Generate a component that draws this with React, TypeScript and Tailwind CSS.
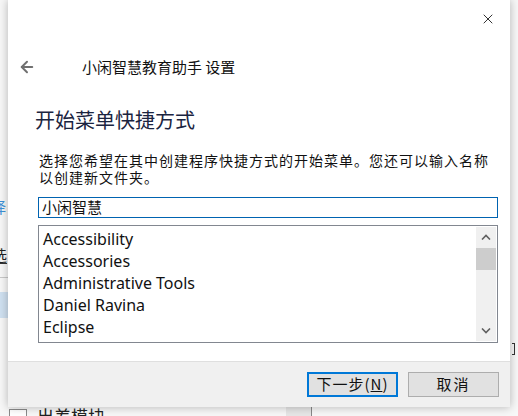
import { X, ArrowLeft } from 'lucide-react';

const cjk = { fontFamily: '"Noto Sans CJK SC", "Noto Sans", sans-serif' };
const latin = { fontFamily: '"Noto Sans", "Noto Sans CJK SC", sans-serif' };

const folders = ['Accessibility', 'Accessories', 'Administrative Tools', 'Daniel Ravina', 'Eclipse'];

function Chevron({ up }: { up?: boolean }) {
  return (
    <svg width="10" height="6" viewBox="0 0 10 6" className="text-[#606060]">
      <path
        d={up ? 'M1 5.5 L5 1.5 L9 5.5' : 'M1 0.5 L5 4.5 L9 0.5'}
        fill="none"
        stroke="currentColor"
        strokeWidth="1.6"
      />
    </svg>
  );
}

function ScrollBar() {
  return (
    <div className="flex w-[20px] flex-col bg-[#f0f0f0]">
      <div className="flex h-[20px] items-center justify-center">
        <Chevron up />
      </div>
      <div className="mt-[1px] h-[22px] bg-[#cdcdcd]" />
      <div className="flex-1" />
      <div className="flex h-[20px] items-center justify-center">
        <Chevron />
      </div>
    </div>
  );
}

// the window that sits behind the installer dialog
function Backdrop() {
  return (
    <div className="absolute inset-0 bg-[#f7f7f7]" style={cjk}>
      <div className="absolute left-[-9px] top-[198px] text-[15px] leading-[18px] text-[#3c8fd6]">择</div>
      <div className="absolute left-[-8px] top-[246px] border-b border-[#333] text-[15px] leading-[17px] text-[#222]">选</div>
      <div className="absolute left-0 top-[277px] h-[1px] w-[8px] bg-[#c8c8c8]" />
      <div className="absolute left-0 top-[292px] h-[26px] w-[8px] bg-[#cfe0f0]" />
      <div className="absolute left-[9px] top-[409px] h-[16px] w-[18px] border border-[#8a8a8a] bg-white" />
      <div className="absolute left-[37px] top-[406px] text-[17px] leading-[20px] text-[#222]">出差模块</div>
      <div className="absolute left-[286px] top-[407px] h-[9px] w-[25px] bg-[#e6e6e6]" />
      <div className="absolute left-[311px] top-[407px] h-[9px] w-[1px] bg-[#888]" />
      <div className="absolute left-[512px] top-[343px] h-[12px] w-[3px] border-y border-r border-[#333]" />
    </div>
  );
}

export default function App() {
  return (
    <div className="relative h-[416px] w-[518px] overflow-hidden">
      <Backdrop />

      <div className="absolute left-[8px] top-0 flex h-[407px] w-[502px] flex-col bg-white shadow-[0_0_9px_rgba(0,0,0,0.28)]">
        {/* title area */}
        <div className="flex h-[38px] justify-end pr-[14px] pt-[11px]">
          <X className="h-[16px] w-[16px] text-[#111]" strokeWidth={1.3} />
        </div>
        <div className="mt-[19px] flex h-[20px] items-center" style={cjk}>
          <ArrowLeft className="ml-[10px] h-[18px] w-[18px] text-[#707070]" strokeWidth={2.6} />
          <span className="ml-[46px] text-[15px] leading-[20px] text-[#111]">小闲智慧教育助手 设置</span>
        </div>

        {/* page content */}
        <div className="flex flex-col pl-[30px] pr-[12px]">
          <h1 className="ml-[-3px] mt-[30px] text-[20px] font-normal leading-[26px] text-[#1a2440]" style={cjk}>
            开始菜单快捷方式
          </h1>
          <p className="ml-[1px] mt-[19px] text-[14px] leading-[17px] tracking-[1px] text-[#111]" style={cjk}>
            选择您希望在其中创建程序快捷方式的开始菜单。您还可以输入名称
            <br />
            以创建新文件夹。
          </p>
          <div
            className="mt-[11px] flex h-[21px] w-[460px] items-center border border-[#0063b1] pl-[3px] text-[15px] text-[#111]"
            style={cjk}
          >
            小闲智慧
          </div>
          <div className="mt-[7px] flex h-[118px] w-[460px] border border-[#828790] p-[1px]">
            <ul className="flex-1 pl-[3px] pt-[1px] text-[16px] leading-[22px] text-[#111]" style={latin}>
              {folders.map((f) => (
                <li key={f}>{f}</li>
              ))}
            </ul>
            <ScrollBar />
          </div>
        </div>

        {/* footer */}
        <div className="mt-auto flex h-[46px] justify-end gap-[10px] border-t border-[#dfdfdf] bg-[#f0f0f0] pr-[11px] pt-[10px]">
          <button
            className="flex h-[25px] w-[91px] items-center justify-center border-2 border-[#0078d7] bg-[#e1e1e1] text-[15px] tracking-[1px] text-[#111]"
            style={cjk}
          >
            下一步(<span className="underline">N</span>)
          </button>
          <button
            className="flex h-[25px] w-[91px] items-center justify-center border border-[#adadad] bg-[#e1e1e1] text-[15px] tracking-[2px] text-[#111]"
            style={cjk}
          >
            取消
          </button>
        </div>
      </div>
    </div>
  );
}
